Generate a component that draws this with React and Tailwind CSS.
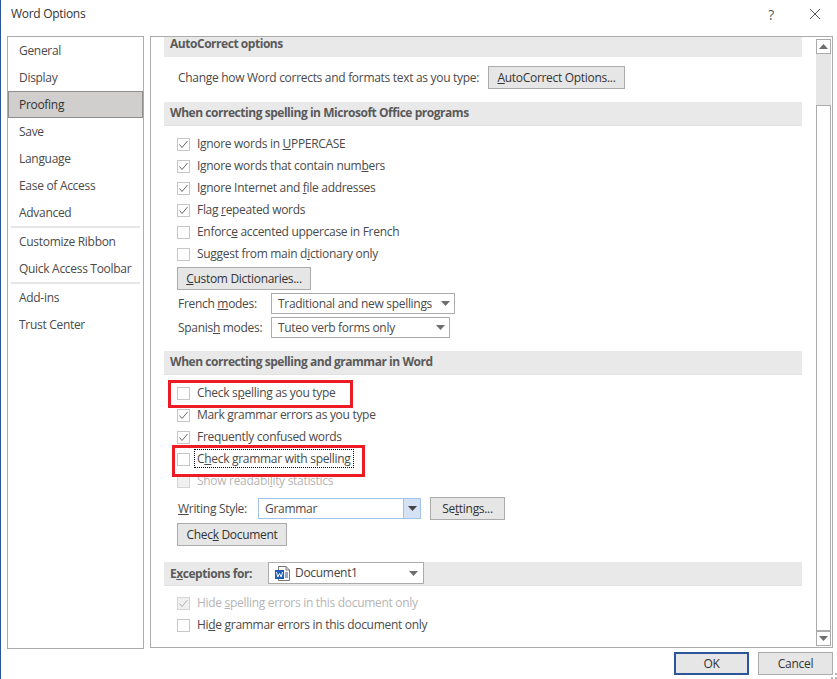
function Check({ checked, disabled, label, focus }) {
  return (
    <div className="flex h-[22px] items-center pl-[13px]">
      <span className={`flex h-[13px] w-[13px] shrink-0 items-center justify-center border ${disabled ? "border-[#d4d4d4] bg-[#f0f0f0]" : "border-[#c6c6c6] bg-white"}`}>
        {checked && (
          <svg width="11" height="11" viewBox="0 0 11 11" fill="none">
            <path d="M1.5 5.5 L4 8.5 L9.5 2" stroke={disabled ? "#b0b0b0" : "#666"} strokeWidth="1" />
          </svg>
        )}
      </span>
      <span className={`mb-[1px] ml-[5px] px-[2px] leading-[17px] ${focus ? "outline-1 outline-dotted outline-black" : ""} ${disabled ? "text-[#b5b5b5]" : ""}`}>{label}</span>
    </div>
  );
}

function Btn({ children, className = "" }) {
  return (
    <div className={`flex h-[23px] items-center justify-center border border-[#ababab] bg-[#e6e6e6] text-[#333] ${className}`}>{children}</div>
  );
}

function Section({ children, className = "" }) {
  return (
    <div className={`flex border-b border-[#e2e2e2] bg-[#e9e9e9] pl-[6px] font-bold tracking-[-0.46px] text-[#5a5a5a] ${className}`}>{children}</div>
  );
}

function Caret({ color = "#6d6d6d" }) {
  return (
    <svg width="9" height="5" viewBox="0 0 9 5"><path d="M0 0 H9 L4.5 5 Z" fill={color} /></svg>
  );
}

function Select({ children, className = "" }) {
  return (
    <div className={`flex h-[21px] items-center justify-between border border-[#ababab] bg-white pl-[6px] pr-[4px] ${className}`}>
      <span>{children}</span>
      <Caret />
    </div>
  );
}

const nav = [
  ["General"], ["Display"], ["Proofing", true], ["Save"], ["Language"], ["Ease of Access"], ["Advanced"],
];

export default function App() {
  return (
    <div
      className="relative flex h-[679px] w-[837px] flex-col overflow-hidden border-l border-[#2b579a] bg-white text-[12px] tracking-[-0.3px] text-[#4a4a4a]"
      style={{ fontFamily: '"Open Sans", "Noto Sans", sans-serif' }}
    >
      <div className="flex h-[36px] shrink-0 items-center justify-between pl-[10px] pr-[16px]">
        <span className="-mt-[8px] text-[#333]">Word Options</span>
        <div className="-mt-[8px] flex items-center gap-[35px]">
          <span className="text-[14px] text-[#555]">?</span>
          <svg width="12" height="12" viewBox="0 0 12 12" fill="none"><path d="M1 1 L11 11 M11 1 L1 11" stroke="#555" strokeWidth="1" /></svg>
        </div>
      </div>

      <div className="flex h-[613px] shrink-0 gap-[6px] pl-[6px] pr-[4px]">
        <div className="flex w-[137px] shrink-0 flex-col border border-[#ababab]">
          {nav.map(([n, active]) => (
            <div key={n} className={`flex h-[27px] items-center ${active ? "border border-[#8e8e8e] bg-[#d0cfcd] pl-[10px] text-[#333]" : "pl-[11px]"}`}>{n}</div>
          ))}
          <div className="mx-[3px] h-[2px] bg-[#e6e6e6]" />
          <div className="flex h-[27px] items-center pl-[11px]">Customize Ribbon</div>
          <div className="flex h-[27px] items-center pl-[11px]">Quick Access Toolbar</div>
          <div className="mx-[3px] h-[2px] bg-[#e6e6e6]" />
          <div className="flex h-[27px] items-center pl-[11px]">Add-ins</div>
          <div className="flex h-[27px] items-center pl-[11px]">Trust Center</div>
        </div>

        <div className="flex h-[612px] min-w-0 flex-1 border border-[#ababab]">
          <div className="w-[651px] shrink-0 pl-[13px]">
            <Section className="h-[20px] items-center border-b-0 pb-[6px]">AutoCorrect options</Section>
            <div className="flex h-[45px] items-center pb-[4px] pl-[14px]">
              <span className="w-[310px] shrink-0">Change how Word corrects and formats text as you type:</span>
              <Btn className="w-[137px]"><span><u>A</u>utoCorrect Options...</span></Btn>
            </div>
            <Section className="h-[24px] items-center pb-[1px]">When correcting spelling in Microsoft Office programs</Section>
            <div className="h-[7px]" />
            <Check checked label={<>Ignore words in <u>U</u>PPERCASE</>} />
            <Check checked label={<>Ignore words that contain num<u>b</u>ers</>} />
            <Check checked label={<>Ignore Internet and <u>f</u>ile addresses</>} />
            <Check checked label={<>Flag <u>r</u>epeated words</>} />
            <Check label={<>Enforc<u>e</u> accented uppercase in French</>} />
            <Check label={<>Suggest from main d<u>i</u>ctionary only</>} />
            <Btn className="ml-[13px] mt-[2px] w-[134px]"><span><u>C</u>ustom Dictionaries...</span></Btn>
            <div className="mt-[3px] flex h-[21px] items-center pl-[14px]">
              <span className="w-[93px]">French <u>m</u>odes:</span>
              <Select className="w-[184px]">Traditional and new spellings</Select>
            </div>
            <div className="mt-[3px] flex h-[21px] items-center pl-[14px]">
              <span className="w-[93px]">Spanis<u>h</u> modes:</span>
              <Select className="w-[179px]">Tuteo verb forms only</Select>
            </div>
            <div className="h-[13px]" />
            <Section className="h-[24px] items-center pb-[1px]">When correcting spelling and grammar in Word</Section>
            <div className="h-[7px]" />
            <Check label={<>Check s<u>p</u>elling as you type</>} />
            <Check checked label={<>Mark grammar errors as you type</>} />
            <Check checked label={<>Frequently confused words</>} />
            <Check focus label={<>C<u>h</u>eck grammar with spelling</>} />
            <Check disabled label={<>Show readabi<u>l</u>ity statistics</>} />
            <div className="mt-[5px] flex h-[23px] items-center pl-[14px]">
              <span className="w-[80px]"><u>W</u>riting Style:</span>
              <div className="flex h-[21px] w-[163px] items-center justify-between border border-[#a3c2e8] bg-white pl-[6px]">
                <span>Grammar</span>
                <div className="flex h-full w-[17px] items-center justify-center border-l border-[#a3c2e8] bg-[#d5e2f3]"><Caret color="#444" /></div>
              </div>
              <Btn className="ml-[9px] w-[75px]"><span>Se<u>t</u>tings...</span></Btn>
            </div>
            <Btn className="ml-[13px] mt-[3px] w-[110px]"><span>Chec<u>k</u> Document</span></Btn>
            <div className="h-[16px]" />
            <Section className="h-[24px] items-start">
              <span className="flex h-[23px] w-[98px] shrink-0 items-center">E<u>x</u>ceptions for:</span>
              <div className="flex h-[22px] w-[156px] items-center justify-between border border-[#ababab] bg-white pl-[5px] pr-[5px] font-normal tracking-[-0.3px] text-[#444]">
                <span className="flex items-center gap-[4px]">
                  <svg width="17" height="17" viewBox="0 0 17 17">
                    <path d="M4.5 1.5 H12 L15.5 5 V15.5 H4.5 Z" fill="#fff" stroke="#777" />
                    <path d="M12 1.5 V5 H15.5" fill="none" stroke="#777" />
                    <path d="M11 8 H14 M11 10 H14 M11 12 H14" stroke="#2b579a" />
                    <rect x="1" y="5" width="9" height="9" fill="#1e5cb8" />
                    <path d="M2.5 7 L3.8 12 L5.5 8.5 L7.2 12 L8.5 7" fill="none" stroke="#fff" strokeWidth="1" />
                  </svg>
                  Document1
                </span>
                <Caret />
              </div>
            </Section>
            <div className="h-[6px]" />
            <Check checked disabled label={<>Hide <u>s</u>pelling errors in this document only</>} />
            <Check label={<>Hi<u>d</u>e grammar errors in this document only</>} />
          </div>

          <div className="ml-[14px] mt-[2px] flex h-[607px] w-[15px] shrink-0 flex-col">
            <div className="flex h-[15px] shrink-0 items-center justify-center border border-[#ababab] bg-white"><svg width="9" height="5" viewBox="0 0 9 5"><path d="M0 5 H9 L4.5 0 Z" fill="#6d6d6d" /></svg></div>
            <div className="h-[51px] shrink-0 bg-[#e6e6e6]" />
            <div className="flex-1 border border-[#ababab] bg-white" />
            <div className="flex h-[15px] shrink-0 items-center justify-center border border-[#ababab] bg-white"><Caret /></div>
          </div>
        </div>
      </div>

      <div className="flex justify-end gap-[9px] pr-[4px] pt-[3px]">
        <div className="flex h-[23px] w-[75px] items-center justify-center border-2 border-[#2b579a] bg-[#e6e6e6] text-[#333]">OK</div>
        <Btn className="w-[75px]">Cancel</Btn>
      </div>

      <svg className="absolute bottom-0 right-0" width="6" height="6" viewBox="0 0 6 6" fill="#b8b8b8">
        <rect x="4" y="0" width="2" height="2" /><rect x="4" y="4" width="2" height="2" /><rect x="0" y="4" width="2" height="2" />
      </svg>

      <div className="absolute left-[167px] top-[380px] h-[28px] w-[185px] border-[3px] border-[#ed1c24]" />
      <div className="absolute left-[171px] top-[445px] h-[32px] w-[193px] border-[3px] border-[#ed1c24]" />
    </div>
  );
}
